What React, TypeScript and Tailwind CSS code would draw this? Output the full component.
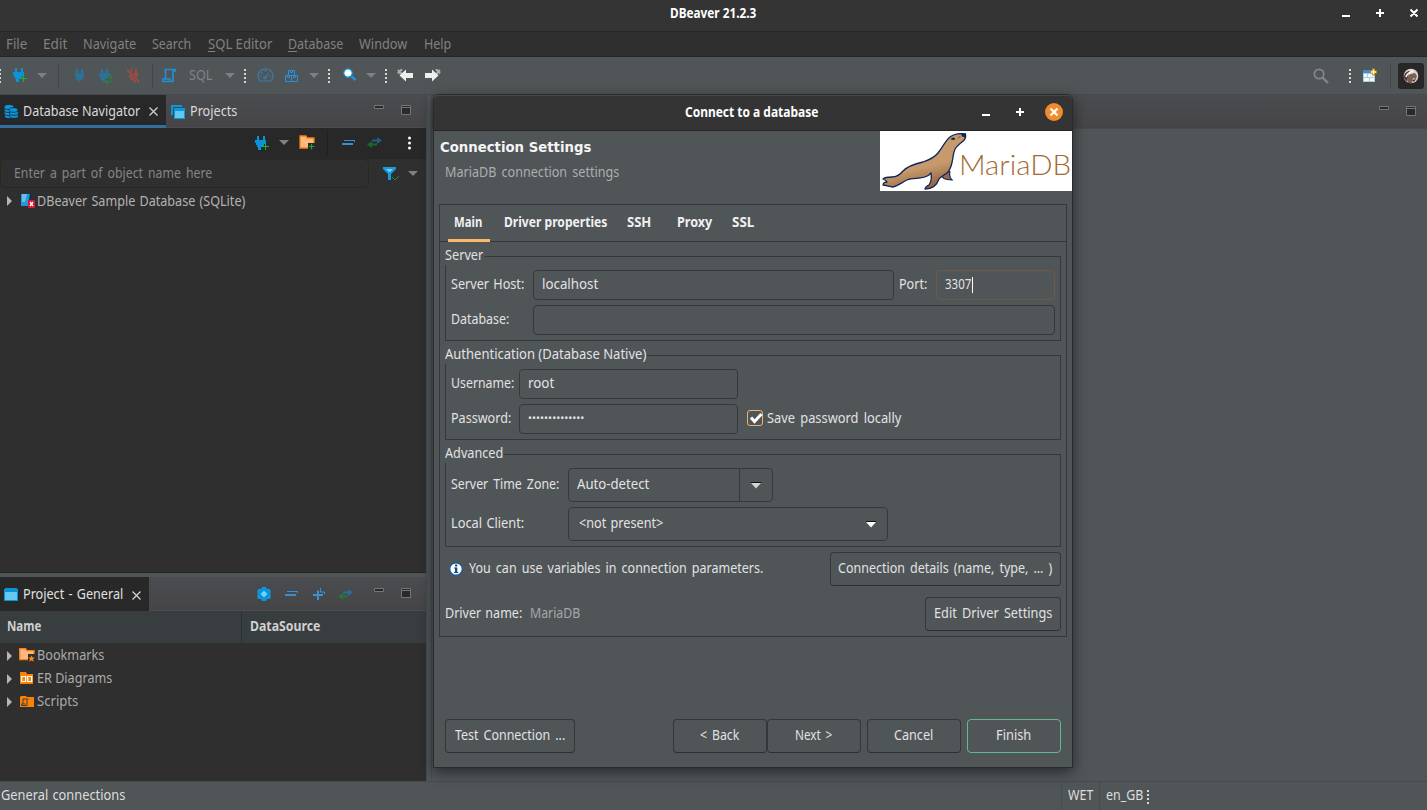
import React, { useLayoutEffect, useRef, useState } from "react";

type TProps = { w: number; low?: boolean; className?: string; children: React.ReactNode };

/* Text fitted to a given advance width, as the condensed interface face sets it. */
function T({ w, low, className = "", children }: TProps) {
  const ref = useRef<HTMLSpanElement>(null);
  const [scale, setScale] = useState(1);
  useLayoutEffect(() => {
    if (ref.current && ref.current.offsetWidth) setScale((w - 0.7) / ref.current.getBoundingClientRect().width);
  }, []);
  return (
    <span className={"block h-5 shrink-0 whitespace-pre " + (low ? "leading-5 " : "leading-[18px] ") + className} style={{ width: w }}>
      <span ref={ref} className="inline-block origin-left" style={{ transform: `scaleX(${scale})` }}>
        {children}
      </span>
    </span>
  );
}

type C = { className?: string };

const Caret = ({ className = "" }: C) => (
  <svg width="10" height="5" viewBox="0 0 10 5" className={"shrink-0 text-[#7e8081] " + className}>
    <path d="M0 0H10L5 5Z" fill="currentColor" />
  </svg>
);
const ComboCaret = ({ className = "" }: C) => (
  <svg width="10" height="7" viewBox="0 0 10 7" className={"shrink-0 " + className}>
    <path d="M0 1H10L5 6.500Z" fill="currentColor" /><path d="M0 0h10v1H0z" fill="#111" />
  </svg>
);
const Grip = ({ className = "" }: C) => (
  <svg width="2" height="14" viewBox="0 0 2 14" className={"shrink-0 " + className} fill="#dad7d0">
    <path d="M0 0h2v2H0zM0 4h2v2H0zM0 8h2v2H0zM0 12h2v2H0z" />
  </svg>
);
const Sep = ({ className = "" }: C) => <span className={"h-[26px] w-px shrink-0 bg-[#434749] " + className} />;

const PLUG = "M3 1h2v4h3V1h2v4h1v4h-1v2H9v1H8v1H5v-1H4v-1H3V9H2V5h1z";
const PlugPlus = ({ className = "" }: C) => (
  <svg width="16" height="16" viewBox="0 0 16 16" className={"shrink-0 " + className} shapeRendering="crispEdges">
    <path d="M3 1h2v4h4V1h2v4h1v4h-2v2H9v1H7v3H4v-3H3v-2H2V8H1V5h2z" fill="#0a93d8" />
    <path d="M11 8h1v3h3v1h-3v3h-1v-3H8v-1h3z" fill="#16b532" />
  </svg>
);
const Plug = ({ className = "" }: C) => (
  <svg width="12" height="16" viewBox="0 0 12 16" className={"shrink-0 " + className} fill="#277399"><path d={PLUG} /></svg>
);
const PlugRefresh = ({ className = "" }: C) => (
  <svg width="16" height="16" viewBox="0 0 16 16" className={"shrink-0 " + className}>
    <path d="M3 1h2v4h3V1h2v4h2v3H9v3H7v3H5v-2H3v-2H2V8H1V5h2z" fill="#277399" />
    <path d="M8 10.500 9.500 9H14M12 7l2 2-2 2M14 12.500 13 14H8M10 12l-2 2 2 2" fill="none" stroke="#278347" strokeWidth="1.200" />
  </svg>
);
const PlugOff = ({ className = "" }: C) => (
  <svg width="14" height="16" viewBox="0 0 14 16" className={"shrink-0 " + className}>
    <path d="M4 1h2v4h3V1h2v4h1v4h-1v2h-1v3H7v-2H5v-1H4V9H3V5h1z" fill="#a34a40" />
    <path d="M1 2 13 14" stroke="#505558" strokeWidth="3" /><path d="M1 2 13 14" stroke="#b34b40" strokeWidth="1.200" />
  </svg>
);
const Script = ({ className = "" }: C) => (
  <svg width="14" height="15" viewBox="0 0 14 15" className={"shrink-0 " + className} fill="none" stroke="#1e8fd4" strokeWidth="1.700">
    <path d="M3.500 11V1.500H13V4M3 1.500V3M11 2v11.500H1V11h7v2" />
  </svg>
);
const Gauge = ({ className = "" }: C) => (
  <svg width="17" height="15" viewBox="0 0 17 15" className={"shrink-0 " + className} fill="none" stroke="#3b7ba5" strokeWidth="1.200">
    <path d="M3 13C-1 8 1.500 1.200 8.500 1.200S18 8 14 13ZM8.500 2v2M3 8h2M12 8h2M4 4l1.500 1.500M8 10l4-5" /><circle cx="8" cy="9.700" r="1.200" />
  </svg>
);
const Boxes = ({ className = "" }: C) => (
  <svg width="14" height="14" viewBox="0 0 14 14" className={"shrink-0 " + className} fill="none" stroke="#2a8fd8" strokeWidth="1">
    <path d="M3.500 1.500h6v5h-6zM.5 6.500h6v6H.5zM6.500 6.500h6v6h-6zM5.500 1.500v2h2v-2M2.500 6.500v2h2v-2M8.500 6.500v2h2v-2" />
  </svg>
);
const Lens = ({ className = "" }: C) => (
  <svg width="14" height="14" viewBox="0 0 14 14" className={"shrink-0 " + className}>
    <path d="M7 7l5.500 5" stroke="#1597df" strokeWidth="2.400" /><circle cx="5" cy="5" r="4.200" fill="#fff" stroke="#168fd4" strokeWidth="1.200" />
  </svg>
);
const Back = ({ className = "" }: C) => (
  <svg width="17" height="13" viewBox="0 0 17 13" className={"shrink-0 " + className}>
    <path d="M1 1l4 4.500M5 0 1 4.500" stroke="#aeb0b0" strokeWidth="2" /><path d="M2.500 6.500 9 .5V4h7v5H9v3.500Z" fill="#efefee" />
  </svg>
);
const Switcher = ({ className = "" }: C) => (
  <svg width="15" height="11" viewBox="0 0 15 11" className={"shrink-0 opacity-60 " + className}>
    <path d="M10 0l5 3.500L10 7V4.500H5v-2h5z" fill="#1d84bd" /><path d="M5 4 0 7.500 5 11V8.500h5v-2H5z" fill="#139332" />
  </svg>
);
const Collapse = ({ className = "" }: C) => (
  <svg width="14" height="6" viewBox="0 0 14 6" className={"shrink-0 " + className} fill="#3a8ece"><path d="M2 0h11v2h-1V1H2zM0 3h11v2H0z" /></svg>
);
const MinMax = ({ className = "" }: C) => (
  <svg width="38" height="12" viewBox="0 0 38 12" className={"shrink-0 " + className} fill="#2a2a2a" stroke="#747575">
    <path d="M.5.5h9v3h-9zM27.500.5h9v9h-9zM27.500 2.500h9" />
  </svg>
);
const TabX = ({ className = "" }: C) => (
  <svg width="9" height="9" viewBox="0 0 9 9" className={"shrink-0 " + className}><path d="M.5.5l8 8M8.500.5l-8 8" stroke="#d4d4d4" strokeWidth="1.200" /></svg>
);
const Expand = ({ className = "" }: C) => (
  <svg width="5" height="10" viewBox="0 0 5 10" className={"shrink-0 " + className}><path d="M0 0 5 5 0 10Z" fill="#b5b5b5" /></svg>
);
const WinControls = () => (
  <svg width="76" height="12" viewBox="0 0 76 12" className="shrink-0" stroke="#fff" strokeWidth="2" fill="none">
    <path d="M0 9h8M34 6h8M38 2v8M68.500 2.500l7 7M75.500 2.500l-7 7" />
  </svg>
);

const menus: [string, number, string][] = [
  ["File", 22, "ml-[6px]"], ["Edit", 25, "ml-[15px]"], ["Navigate", 54, "ml-[15px]"], ["Search", 40, "ml-[15px]"],
  ["SQL Editor", 65, "ml-[16px]"], ["Database", 56, "ml-[15px]"], ["Window", 49, "ml-[15px]"], ["Help", 28, "ml-[16px]"],
];

function TopBars() {
  return (
    <>
      <div className="flex h-[31px] shrink-0 items-start bg-[#343434] pt-[3px] font-bold text-white">
        <T low w={87} className="ml-[670px]">DBeaver 21.2.3</T>
        <div className="ml-[585px] mt-1"><WinControls /></div>
      </div>
      <div className="flex h-[26px] shrink-0 items-center border-b border-t border-[#262626] bg-[#2f2f2f] text-[#818181]">
        {menus.map(([name, w, m]) => (
          <T low key={name} w={w} className={m}>
            {name === "SQL Editor" || name === "Database" ? <><span className="underline underline-offset-2">{name[0]}</span>{name.slice(1)}</> : name}
          </T>
        ))}
      </div>
      <div className="flex h-[37px] shrink-0 items-center bg-[#505558]">
        <Grip className="-ml-px" />
        <PlugPlus className="-mt-px ml-[11px]" /><Caret className="ml-[9px]" />
        <Sep className="ml-[11px]" />
        <Plug className="ml-[14px]" /><PlugRefresh className="ml-[13px]" /><PlugOff className="ml-[12px]" />
        <Sep className="ml-[12px]" />
        <Script className="-mt-px ml-[9px]" />
        <T w={24} className="ml-[13px] text-[#818485]">SQL</T><Caret className="ml-[12px]" />
        <Grip className="ml-[9px]" />
        <Gauge className="ml-[11px]" /><Boxes className="ml-[11px]" /><Caret className="ml-[10px]" />
        <Grip className="ml-[9px]" /><Lens className="-mt-px ml-[13px]" /><Caret className="ml-[9px]" />
        <Grip className="ml-[9px]" /><Back className="-mt-px ml-[10px]" /><Back className="-mt-px ml-[10px] -scale-x-100" />
        <svg width="16" height="16" viewBox="0 0 16 16" className="ml-auto shrink-0" fill="none" stroke="#84888a"><circle cx="6" cy="6" r="4.700" strokeWidth="1.700" /><path d="m9.500 9.500 5.500 5.500" strokeWidth="2.300" /></svg>
        <Grip className="ml-[20px]" />
        <svg width="15" height="15" viewBox="0 0 15 15" className="ml-[12px] shrink-0">
          <path d="M0 2h12v12H0z" fill="#b5cbd2" /><path d="M0 2h10v3H0z" fill="#438ad3" /><path d="M1 6h3v3H1zM5 6h6v3H5zM1 10h5v3H1zM7 10h4v3H7z" fill="#eefaff" />
          <path d="M7 4h7M10.500.5v7" stroke="#c48c19" strokeWidth="3" /><path d="M8 4h5M10.500 1.500v5" stroke="#fff2c0" strokeWidth="1.300" />
        </svg>
        <Sep className="ml-[12px]" />
        <span className="ml-[7px] mr-[3px] flex size-[26px] items-center justify-center rounded-[3px] bg-[#272727]">
          <svg width="16" height="16" viewBox="0 0 16 16"><circle cx="8" cy="8" r="7.300" fill="#dfd3cb" /><path d="M5 15c-1-5-1-8 3-9l4-1 2 3-1 3-3-1-1 5Z" fill="#7a5f52" /><path d="M1 10c0-5 3-7 6-7l-2 5-1 6ZM9 12l4-1-2 3Z" fill="#4a3730" /><path d="M3 9c1-4 4-5 7-6" stroke="#fff" strokeWidth="1.500" fill="none" /></svg>
        </span>
      </div>
    </>
  );
}

function NavigatorPane() {
  return (
    <section className="flex h-[478px] shrink-0 flex-col border-b border-[#242424] bg-[#2f2f2f]">
      <div className="flex h-[33px] shrink-0 items-center border-b border-[#4d4e51] bg-linear-to-b from-[#4b4c50] to-[#454547]">
        <div className="flex h-[33px] w-[166px] items-center border-b-[3px] border-[#356f9f] bg-[#282828] pt-[2px] text-[#dadada]">
          <svg width="15" height="15" viewBox="0 0 15 15" className="ml-[4px] mt-[2px] shrink-0" fill="#0d95dc" stroke="#17272e" strokeWidth=".8"><ellipse cx="5.500" cy="12" rx="5.200" ry="2.500" /><ellipse cx="5" cy="9" rx="5" ry="2.500" /><ellipse cx="5" cy="6" rx="5" ry="2.500" /><ellipse cx="5" cy="3" rx="5" ry="2.500" /><ellipse cx="10" cy="12" rx="4.500" ry="2.300" /><ellipse cx="10" cy="9" rx="4.500" ry="2.300" /><ellipse cx="9.500" cy="6" rx="4.500" ry="2.300" /></svg>
          <T low w={118} className="ml-[4px]">Database Navigator</T>
          <TabX className="ml-[8px] mt-[2px]" />
        </div>
        <svg width="14" height="14" viewBox="0 0 14 14" className="ml-[5px] mt-px shrink-0"><path d="M0 0h11v2H2v8H0z" fill="#0b98dd" /><path d="M3 3h11v11H3z" fill="#0b98dd" /><path d="M4 6h9v7H4z" fill="#62c8ee" /></svg>
        <T low w={48} className="ml-[5px] text-[#dadada]">Projects</T>
        <MinMax className="ml-[136px]" />
      </div>
      <div className="flex h-[31px] shrink-0 items-center bg-[#282828] pb-[2px]">
        <PlugPlus className="ml-[254px]" /><Caret className="ml-[9px]" />
        <svg width="17" height="15" viewBox="0 0 17 15" className="ml-[10px] shrink-0"><path d="M1 1h6l1 2h7v10H1z" fill="#ffb984" stroke="#f58208" strokeWidth="1.300" /><path d="M9 8h8v7H9z" fill="#282828" /><path d="M12.500 9v5.500M10 11.500h5.500" stroke="#17a637" strokeWidth="1.200" /></svg>
        <Sep className="ml-[11px] !bg-[#202020]" />
        <Collapse className="ml-[14px]" /><Switcher className="ml-[11px]" />
        <svg width="3" height="14" viewBox="0 0 3 14" className="ml-[26px]" fill="#fff"><circle cx="1.500" cy="2" r="1.500" /><circle cx="1.500" cy="7" r="1.500" /><circle cx="1.500" cy="12" r="1.500" /></svg>
      </div>
      <div className="flex h-[29px] shrink-0 items-center">
        <div className="flex h-[29px] w-[369px] items-center rounded border border-[#282828] text-[#858585]">
          <T w={199} className="ml-[13px] [word-spacing:2px]">Enter a part of object name here</T>
        </div>
        <svg width="17" height="14" viewBox="0 0 17 14" className="ml-[14px]"><path d="M0 0h13v2L8 7v6H5V7L0 2z" fill="#159bdc" /><path d="M3 2h7L7 5H6z" fill="#73d2f1" /><path d="m9 10 3 3 4-4" fill="none" stroke="#198f37" /></svg>
        <Caret className="ml-[8px]" />
      </div>
      <div className="flex h-[25px] items-center text-[#b3b3b3]">
        <Expand className="ml-[7px] mt-px" />
        <svg width="15" height="15" viewBox="0 0 15 15" className="ml-[9px] shrink-0"><path d="M0 1h9L7 13H0z" fill="#2598dc" /><path d="M1 1h5L4 9H1z" fill="#6abcf0" /><path d="M9 1h3l-3 6H8z" fill="#09374d" /><path d="M7 7h7v8H7z" fill="#d71930" /><path d="m9 9 3 4M12 9l-3 4" stroke="#fff" strokeWidth="1.300" /></svg>
        <T low w={209} className="ml-px [word-spacing:1px]">DBeaver Sample Database (SQLite)</T>
      </div>
    </section>
  );
}

function FolderIcon({ kind }: { kind: number }) {
  return (
    <svg width="16" height="14" viewBox="0 0 16 14" className="-mt-px ml-[7px] shrink-0">
      {kind === 0 && <><path d="M.7.7h6l1 2H15v9H.7z" fill="#ffb787" stroke="#f68207" strokeWidth="1.300" /><path d="M9 6h7v8H9z" fill="#2f2f2f" /><path d="m12.500 7.500 1 2H16l-2 1.500.8 2.700-2.300-1.500-2.300 1.500.8-2.700-2-1.500h2.500z" fill="#ff8b12" /></>}
      {kind === 1 && <><path d="M1 1h6l1 2h6v10H1z" fill="#f78205" /><path d="M2.700 5.500h4v5h-4zM8.700 5.500h4v5h-4z" fill="#f78205" stroke="#fff" strokeWidth="1.200" /></>}
      {kind === 2 && <><path d="M1 3l1-1h5l1 1h7v10H1z" fill="#f78205" /><path d="M4 10V5h5.500M8 5.500v6H2.500V10h4" fill="none" stroke="#494035" strokeWidth="1" /></>}
    </svg>
  );
}

function ProjectPane() {
  const rows: [string, number][] = [["Bookmarks", 68], ["ER Diagrams", 76], ["Scripts", 42]];
  return (
    <section className="mt-[4px] flex min-h-0 flex-1 flex-col bg-[#2f2f2f]">
      <div className="flex h-[34px] shrink-0 items-center border-b border-t border-[#4d4e51] bg-linear-to-b from-[#4b4c50] to-[#454547]">
        <div className="flex h-[34px] w-[149px] items-center bg-[#282828] text-[#e0e0e0]">
          <svg width="14" height="13" viewBox="0 0 14 13" className="ml-[4px]"><path d="M0 1h1V0h12v1h1v12H0z" fill="#0b93d6" /><path d="M1 4h12v8H1z" fill="#63c9ef" /></svg>
          <T low w={101} className="ml-[5px] [word-spacing:1px]">Project - General</T><TabX className="ml-[8px] mt-[2px]" />
        </div>
        <svg width="14" height="14" viewBox="0 0 14 14" className="ml-[108px]"><path d="M5 0h4l1 2h3l1 3-1 2 1 2-1 3h-3l-1 2H5l-1-2H1L0 9l1-2-1-2 1-3h3z" fill="#0d94db" /><path d="M6 4h2v1h1v1h1v2H9v1H8v1H6V9H5V8H4V6h1V5h1z" fill="#6fd1f5" /></svg>
        <Collapse className="ml-[14px]" />
        <svg width="13" height="13" viewBox="0 0 13 13" className="ml-[14px]" fill="none" stroke="#3b91d1"><path d="M5 2.500V12M0 7h10" strokeWidth="2" /><path d="M7.500 0v4h4v2" strokeWidth="1" /></svg>
        <Switcher className="ml-[12px]" />
        <MinMax className="ml-[21px]" />
      </div>
      <div className="flex h-[32px] shrink-0 items-center bg-[#383d3f] font-bold text-[#d0d0d0]">
        <T w={35} className="ml-[7px]">Name</T><span className="ml-[199px] h-full w-px bg-[#2d3031]" /><T w={71} className="ml-[8px]">DataSource</T>
      </div>
      <div className="flex flex-col pt-px text-[#aaaaaa]">
        {rows.map(([name, w], i) => (
          <div key={name} className="flex h-[23px] items-center"><Expand className="ml-[7px]" /><FolderIcon kind={i} /><T w={w} className="ml-[2px]">{name}</T></div>
        ))}
      </div>
    </section>
  );
}

function Group({ title, w, className = "", children }: { title: string; w: number; className?: string; children: React.ReactNode }) {
  return (
    <div className={"relative ml-[5px] w-[616px] shrink-0 border border-[#36393b] " + className}>
      <T low w={w} className="absolute -left-px -top-[12px] bg-[#505558]">{title}</T>
      {children}
    </div>
  );
}

const Box = ({ className = "", children }: { className?: string; children?: React.ReactNode }) => (
  <div className={"flex shrink-0 items-center rounded-[4px] border border-[#36393b] " + className}>{children}</div>
);

const Btn = ({ w, tw, label, className = "" }: { w: number; tw: number; label: string; className?: string }) => (
  <button className={"flex h-[34px] shrink-0 items-center justify-center rounded-[4px] border border-[#343738] border-b-[#2d3031] " + className} style={{ width: w }}>
    <T w={tw} className="text-left [word-spacing:2px]">{label}</T>
  </button>
);

function MariaBanner() {
  return (
    <svg width="192" height="60" viewBox="0 0 192 60" className="shrink-0 bg-white">
      <defs><linearGradient id="fur" gradientUnits="userSpaceOnUse" x1="45" y1="28" x2="52" y2="58"><stop offset=".25" stopColor="#c69a6c" /><stop offset="1" stopColor="#8e5c3a" /></linearGradient></defs>
      <path d="M60 42c1 5 5 7 12 7-2-2-3-5-2-9" fill="#9a694b" stroke="#0d2757" strokeWidth="1.200" />
      <path d="M85.500 3C80 2 74 3 70 6c-5 4-7 10-12 16-4 5-9 7-15 9-9 2-15 4-20 9-4 5-7 6-11 6-4 0-7 0-9 2 2 1 4 2 4 3-2 0-4 1-4 3 3 0 6 2 10 2 5-1 8-4 14-7 7-3 15 0 22-5l2-2c1 5 0 9-2 12-2 1-4 2-4 4 7 0 12-4 14-10 2-3 6-4 9-7 5-6 4-13 6-20 1-5 4-7 8-10 3-2 4-5 3.500-8Z" fill="url(#fur)" stroke="#0d2757" strokeWidth="1.300" strokeLinejoin="round" />
      <path d="M81 2.800 86 2.500l-1 4-3-1Z" fill="#102a50" /><path d="M70.500 8q3-3 5 0-2 2-5 0Z" fill="#122b4e" /><path d="M77 8q2-4 4-3-1 3-4 3" fill="#8b7d70" />
      <text x="79" y="44" textLength="112" lengthAdjust="spacingAndGlyphs" fill="#a26a35" className="text-[27px] [font-family:Lato,sans-serif] font-light">MariaDB</text>
    </svg>
  );
}

function Dialog() {
  const tabs: [string, number, string][] = [["Main", 29, "ml-[15px]"], ["Driver properties", 104, "ml-[14px]"], ["SSH", 25, "ml-[19px]"], ["Proxy", 36, "ml-[25px]"], ["SSL", 23, "ml-[19px]"]];
  return (
    <div className="absolute left-[433px] top-[94px] flex h-[674px] w-[640px] flex-col rounded-t-[6px] border border-[#292c2d] bg-[#505558] text-[#e2e2e2] shadow-[0_4px_14px_rgba(0,0,0,0.5)]">
      <div className="flex h-[36px] shrink-0 items-center rounded-t-[5px] border-b border-t border-b-[#262626] border-t-[#474747] bg-[#343434] pb-[2px] font-bold text-white">
        <T low w={134} className="ml-[251px]">Connect to a database</T>
        <svg width="82" height="20" viewBox="0 0 82 20" className="ml-[162px]" fill="none" stroke="#fff" strokeWidth="2"><path d="M1 13h8M35 10h8M39 6v8" /><circle cx="73" cy="10" r="9" fill="#f28b2b" stroke="none" /><path d="m69.500 6.500 7 7M76.500 6.500l-7 7" strokeWidth="2.300" /></svg>
      </div>
      <div className="flex h-[60px] shrink-0 justify-between">
        <div className="pt-[6px]">
          <T low w={152} className="ml-[6px] font-bold text-[#f4f4f4] [font-family:'DejaVu_Sans',sans-serif]">Connection Settings</T>
          <T low w={175} className="ml-[11px] mt-[5px] text-[#acaeaf] [word-spacing:2px]">MariaDB connection settings</T>
        </div>
        <MariaBanner />
      </div>
      <div className="ml-[5px] mt-[13px] flex h-[433px] w-[628px] shrink-0 flex-col border border-[#36393b]">
        <div className="-ml-px flex h-[37px] shrink-0 border-b border-[#36393b] pt-[7px] font-bold text-[#f0f0f0]">
          {tabs.map(([name, w, m], i) => (
            <div key={name} className={m}>
              <T low w={w}>{name}</T>
              {i === 0 && <div className="-ml-[6px] mt-[7px] h-[3px] w-[42px] bg-[#fdb768]" />}
            </div>
          ))}
        </div>
        <Group title="Server" w={39} className="mt-[14px] h-[85px]">
          <div className="mt-[13px] flex items-center">
            <T w={74} className="ml-[5px] [word-spacing:1px]">Server Host:</T><Box className="ml-[8px] h-[30px] w-[361px]"><T w={57} className="ml-[8px]">localhost</T></Box>
            <T w={29} className="ml-[5px]">Port:</T>
            <Box className="ml-[8px] h-[30px] w-[119px] !border-[#6b5b45]"><T w={27} className="ml-[8px]">3307</T><span className="h-4 w-px bg-white" /></Box>
          </div>
          <div className="mt-[5px] flex items-center"><T w={59} className="ml-[5px]">Database:</T><Box className="ml-[23px] h-[30px] w-[522px]" /></div>
        </Group>
        <Group title="Authentication (Database Native)" w={202} className="mt-[14px] h-[85px]">
          <div className="mt-[13px] flex items-center"><T w={64} className="ml-[5px]">Username:</T><Box className="ml-[4px] h-[30px] w-[219px]"><T w={27} className="ml-[8px]">root</T></Box></div>
          <div className="mt-[5px] flex items-center">
            <T w={61} className="ml-[5px]">Password:</T>
            <Box className="ml-[7px] h-[30px] w-[219px]"><T w={57} className="ml-[8px] text-[11px]">••••••••••••••</T></Box>
            <svg width="16" height="16" viewBox="0 0 16 16" className="-mt-[2px] ml-[9px]"><rect x=".5" y=".5" width="15" height="15" rx="2.500" fill="none" stroke="#efb069" /><path d="m4 7.500 3.500 4L14.500 4" stroke="#fff" strokeWidth="3" fill="none" /></svg>
            <T w={135} className="ml-[4px] [word-spacing:2px]">Save password locally</T>
          </div>
        </Group>
        <Group title="Advanced" w={59} className="mt-[14px] h-[93px]">
          <div className="mt-[13px] flex items-center">
            <T w={109} className="ml-[5px] [word-spacing:2px]">Server Time Zone:</T>
            <Box className="ml-[8px] h-[34px] w-[205px]"><T w={73} className="ml-[8px]">Auto-detect</T><span className="ml-[89px] h-full w-px bg-[#36393b]" /><ComboCaret className="ml-[11px] text-[#d7d2d5]" /></Box>
          </div>
          <div className="mt-[5px] flex items-center">
            <T w={74} className="ml-[5px] [word-spacing:1px]">Local Client:</T>
            <Box className="ml-[43px] h-[34px] w-[320px]"><T w={85} className="ml-[10px] [word-spacing:1px]">&lt;not present&gt;</T><ComboCaret className="ml-[202px] text-white" /></Box>
          </div>
        </Group>
        <div className="mt-[5px] flex items-center">
          <svg width="14" height="14" viewBox="0 0 14 14" className="-mt-px ml-[9px]"><circle cx="7" cy="7" r="6.300" fill="#fff" stroke="#225a99" strokeWidth="1.400" /><path d="M6 2.500h2.300v2H6zM5 5.500h3.300v4.500h1v1H5v-1h1V6.500H5z" fill="#124b87" /></svg>
          <T w={295} className="ml-[6px] [word-spacing:2px]">You can use variables in connection parameters.</T>
          <Btn w={231} tw={215} label="Connection details (name, type, ... )" className="ml-[66px]" />
        </div>
        <div className="mt-[11px] flex items-center">
          <T w={78} className="ml-[5px] [word-spacing:1px]">Driver name:</T><T w={51} className="ml-[7px] text-[#a5a8a9]">MariaDB</T>
          <Btn w={136} tw={119} label="Edit Driver Settings" className="ml-[344px]" />
        </div>
      </div>
      <div className="mt-[82px] flex">
        <Btn w={130} tw={111} label="Test Connection ..." className="ml-[11px]" />
        <Btn w={94} tw={40} label="< Back" className="ml-[98px]" />
        <Btn w={94} tw={38} label="Next >" />
        <Btn w={94} tw={40} label="Cancel" className="ml-[6px]" />
        <Btn w={94} tw={36} label="Finish" className="ml-[6px] !border-[#60bb91]" />
      </div>
    </div>
  );
}

export default function App() {
  return (
    <div className="relative flex h-[810px] w-[1427px] flex-col overflow-hidden bg-[#505558] text-[13.5px] [font-family:'Noto_Sans',sans-serif]">
      <TopBars />
      <div className="h-px shrink-0 bg-[#484b4e]" />
      <main className="flex min-h-0 flex-1">
        <aside className="flex w-[427px] shrink-0 flex-col border-r border-[#47494c]"><NavigatorPane /><ProjectPane /></aside>
        <section className="ml-[4px] flex-1 border-l border-[#484d4f]">
          <div className="flex h-[34px] justify-end border-b border-[#484a4c] bg-linear-to-b from-[#4b4c50] to-[#454547] pt-[11px]"><MinMax className="mr-[10px]" /></div>
        </section>
      </main>
      <footer className="flex h-[29px] shrink-0 items-center border-t border-[#464b4d] text-[#dddddd]">
        <T w={125} className="ml-px [word-spacing:1px]">General connections</T>
        <span className="ml-[935px] h-full w-px bg-[#464b4d]" /><T w={26} className="ml-[6px]">WET</T>
        <span className="ml-[5px] h-full w-px bg-[#464b4d]" /><T w={38} className="ml-[6px]">en_GB</T><Grip className="ml-[3px] mt-[2px]" />
      </footer>
      <Dialog />
    </div>
  );
}
